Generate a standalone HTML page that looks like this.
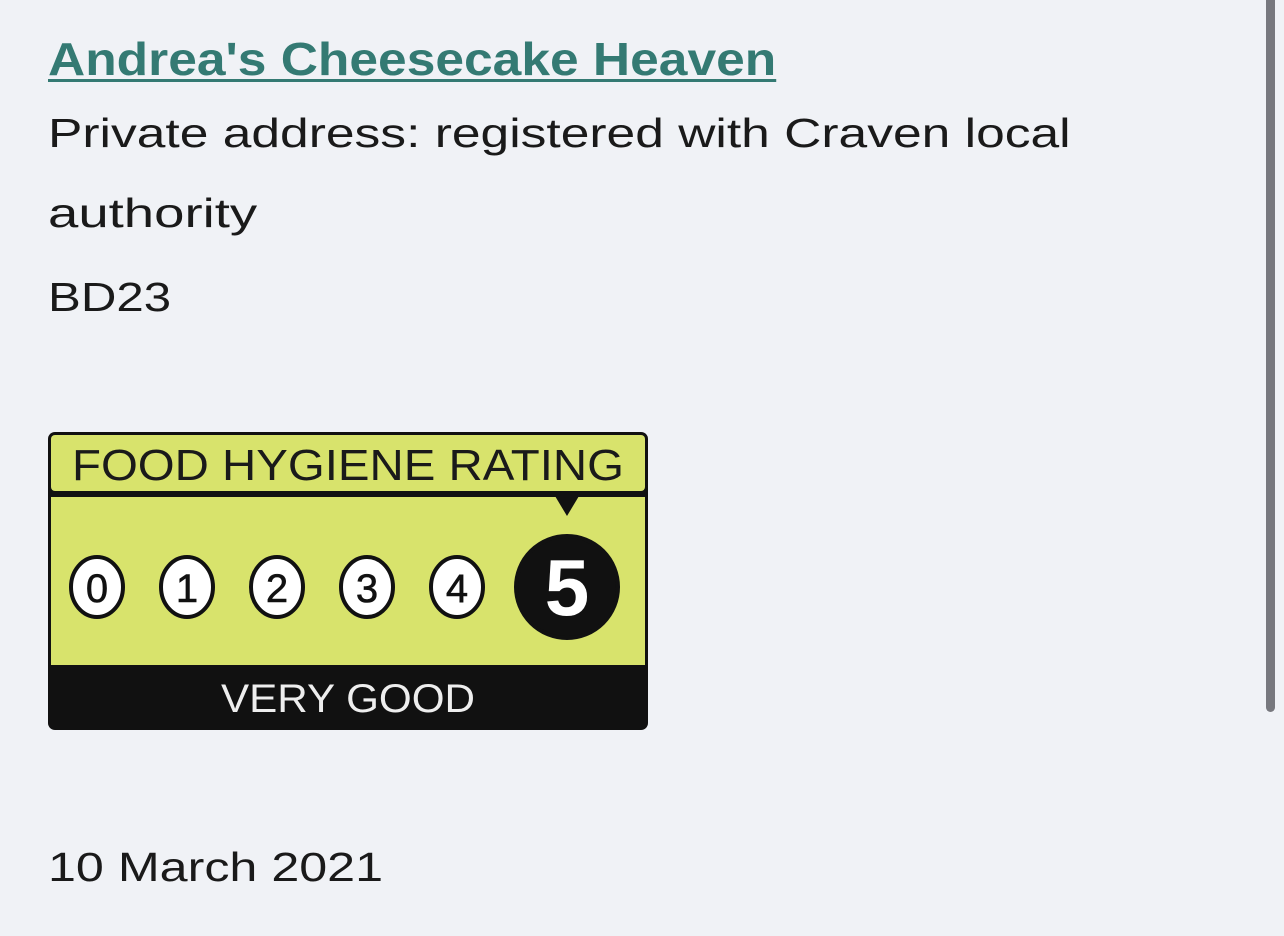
<!DOCTYPE html>
<html><head><style>
body{margin:0;width:1284px;height:936px;background:#f0f2f6;font-family:"Liberation Sans",sans-serif;overflow:hidden;position:relative;color:#111}
.t{position:absolute;left:48px;top:32px;font-size:46px;font-weight:bold;color:#347a73;text-decoration:underline;text-decoration-thickness:3px;text-underline-offset:4px;transform-origin:0 0;transform:scaleX(1.12);white-space:nowrap}
.p{position:absolute;left:48px;font-size:41px;color:#1a1a1a;transform-origin:0 0;white-space:nowrap}
.sb{position:absolute;left:1266px;top:0;width:9px;height:712px;background:#77787e;border-radius:0 0 5px 5px}
</style></head><body>
<div class="t">Andrea's Cheesecake Heaven</div>
<div class="p" style="top:110px;transform:scaleX(1.257)">Private address: registered with Craven local</div>
<div class="p" style="top:190px;transform:scaleX(1.33)">authority</div>
<div class="p" style="top:274px;transform:scaleX(1.2)">BD23</div>
<div class="p" style="top:844px;transform:scaleX(1.225)">10 March 2021</div>
<svg style="position:absolute;left:48px;top:432px" width="600" height="298" viewBox="0 0 600 298">
<rect x="0" y="0" width="600" height="298" rx="7" fill="#111"/>
<rect x="3" y="3" width="594" height="56" rx="4" fill="#d8e36c"/>
<rect x="3" y="65" width="594" height="168" fill="#d8e36c"/>
<polygon points="507,64 531,64 519,84" fill="#111"/>
<text x="300" y="48" font-size="44" text-anchor="middle" font-family="Liberation Sans" fill="#1a1a1a" textLength="552" lengthAdjust="spacingAndGlyphs">FOOD HYGIENE RATING</text>
<g stroke="#111" stroke-width="4">
<ellipse cx="49" cy="155" rx="26" ry="30" fill="#fff"/>
<ellipse cx="139" cy="155" rx="26" ry="30" fill="#fff"/>
<ellipse cx="229" cy="155" rx="26" ry="30" fill="#fff"/>
<ellipse cx="319" cy="155" rx="26" ry="30" fill="#fff"/>
<ellipse cx="409" cy="155" rx="26" ry="30" fill="#fff"/>
<ellipse cx="519" cy="155" rx="51" ry="51" fill="#111"/>
</g>
<g font-family="Liberation Sans" font-size="40" text-anchor="middle" fill="#111" stroke="#111" stroke-width="0.6">
<text x="49" y="170">0</text><text x="139" y="170">1</text><text x="229" y="170">2</text><text x="319" y="170">3</text><text x="409" y="170">4</text>
</g>
<text x="519" y="183" font-size="80" font-weight="bold" text-anchor="middle" font-family="Liberation Sans" fill="#fff">5</text>
<text x="300" y="280" font-size="40" text-anchor="middle" font-family="Liberation Sans" fill="#eee" textLength="254" lengthAdjust="spacingAndGlyphs">VERY GOOD</text>
</svg>
<div class="sb"></div>
</body></html>
